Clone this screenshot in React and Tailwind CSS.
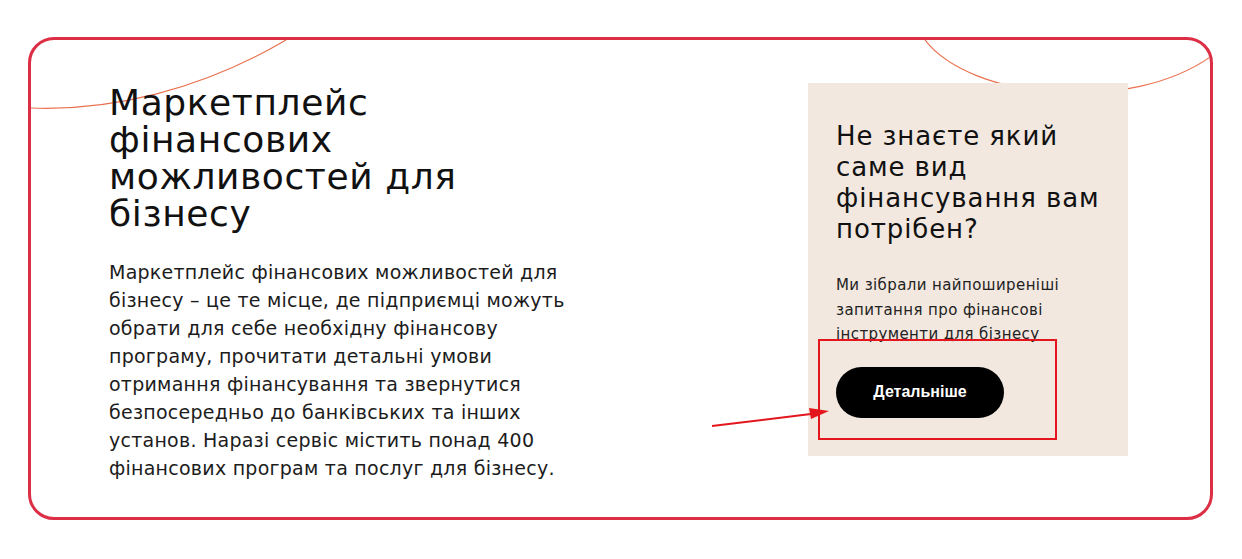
import React from 'react';

const HEAD = { fontFamily: '"DejaVu Sans", "Noto Sans", sans-serif' };
const BTN = { fontFamily: '"Liberation Sans", Arial, sans-serif' };

function Curves() {
  return (
    <svg className="absolute inset-0 z-0 h-full w-full" viewBox="0 0 1179 477" preserveAspectRatio="none" fill="none">
      <path d="M0 68 C 80 71, 170 50, 255 0" stroke="#e9714f" strokeWidth="1.2" />
      <path d="M894 0 C 940 60, 1100 75, 1182 15" stroke="#e9714f" strokeWidth="1.2" />
    </svg>
  );
}

function Annotation() {
  return (
    <>
      <div className="absolute left-[787px] top-[299px] z-20 h-[101px] w-[239px] border-2 border-[#e3161d]" />
      <svg className="absolute left-[676px] top-[360px] z-20 h-[30px] w-[130px]" viewBox="0 0 130 30" fill="none">
        <path d="M5 26 L 112 13" stroke="#e3161d" strokeWidth="2" />
        <path d="M102 8 L 122 11 L 104 19 Z" fill="#e3161d" />
      </svg>
    </>
  );
}

export default function App() {
  return (
    <div className="h-[559px] w-[1242px] bg-white pt-[37px] pl-[28px]">
      <div className="relative flex h-[483px] w-[1185px] justify-between overflow-hidden rounded-[26px] border-[3px] border-[#dc2f45] bg-white">
        <Curves />
        <div className="relative z-10 pl-[78px] pt-[44px]">
          <h1 className="w-[430px] text-[36px] font-normal leading-[37px] tracking-[0.6px] text-[#111]" style={HEAD}>
            Маркетплейс фінансових можливостей для бізнесу
          </h1>
          <p className="mt-[26px] w-[480px] text-[19px] leading-[28px] tracking-[0.25px] text-[#1c1c1c]" style={HEAD}>
            Маркетплейс фінансових можливостей для бізнесу – це те місце, де підприємці можуть обрати для себе необхідну фінансову програму, прочитати детальні умови отримання фінансування та звернутися безпосередньо до банківських та інших установ. Наразі сервіс містить понад 400 фінансових програм та послуг для бізнесу.
          </p>
        </div>
        <div className="relative z-10 mt-[43px] mr-[82px] h-[373px] w-[320px] bg-[#f2e8df] px-[28px] pt-[38px]">
          <h2 className="text-[26px] font-normal leading-[31px] tracking-[0.9px] text-[#111]" style={HEAD}>
            Не знаєте який саме вид фінансування вам потрібен?
          </h2>
          <p className="mt-[28px] w-[250px] text-[15px] leading-[24.5px] tracking-[0.4px] text-[#222]" style={HEAD}>
            Ми зібрали найпоширеніші запитання про фінансові інструменти для бізнесу
          </p>
          <button className="mt-[20px] flex h-[51px] w-[168px] items-center justify-center rounded-full bg-black text-[16px] font-bold text-white" style={BTN}>
            Детальніше
          </button>
        </div>
        <Annotation />
      </div>
    </div>
  );
}
